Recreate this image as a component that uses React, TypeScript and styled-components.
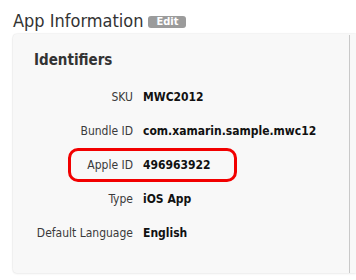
import React from "react";
import styled, { createGlobalStyle } from "styled-components";

const Global = createGlobalStyle`
  html, body { margin: 0; padding: 0; background: #ffffff; }
  body { font-family: "DejaVu Sans Condensed", "DejaVu Sans", "Liberation Sans", sans-serif; font-stretch: semi-condensed; }
`;

const Page = styled.div`
  width: 356px;
  height: 280px;
  overflow: hidden;
  padding: 10px 0 0 13px;
  box-sizing: border-box;
`;

const Header = styled.div`
  display: flex;
  align-items: center;
  gap: 5px;
  height: 22px;
`;

const Title = styled.h1`
  margin: 0;
  font-size: 18px;
  font-weight: normal;
  line-height: 22px;
  color: #333333;
`;

const Badge = styled.span`
  display: inline-flex;
  align-items: center;
  justify-content: center;
  width: 38px;
  height: 12px;
  margin-top: 2px;
  border-radius: 3px;
  background: #9b9b9b;
  color: #ffffff;
  font-size: 11px;
  font-weight: bold;
  line-height: 12px;
`;

const Panel = styled.section`
  margin-top: 2px;
  display: flex;
  background: #f8f8f8;
  border-radius: 4px 0 0 4px;
  box-shadow: 0 -1px 1px rgba(0, 0, 0, 0.04), 0 1px 2px rgba(0, 0, 0, 0.08), -1px 0 1px rgba(0, 0, 0, 0.04);
  padding-right: 6px;
`;

const Inner = styled.div`
  flex: 1;
  margin-top: 1px;
  border-right: 1px solid #c9c9c9;
  padding: 16px 0 23px 0;
`;

const Heading = styled.h2`
  margin: 0 0 11px 21px;
  font-size: 15px;
  font-weight: bold;
  line-height: 18px;
  color: #333333;
`;

const Rows = styled.div`
  position: relative;
  display: grid;
  grid-template-columns: 120px 1fr;
  grid-auto-rows: 34px;
  column-gap: 10px;
  align-items: center;
`;

const Label = styled.div`
  text-align: right;
  font-size: 12px;
  color: #3a3a3a;
  white-space: nowrap;
`;

const Value = styled.div`
  font-size: 12px;
  font-weight: bold;
  color: #111111;
  white-space: nowrap;
`;

const Highlight = styled.div<{ $row: number }>`
  position: absolute;
  left: 55px;
  width: 169px;
  top: ${(p) => p.$row * 34}px;
  height: 34px;
  box-sizing: border-box;
  border: 3px solid #f20000;
  border-radius: 10px;
  pointer-events: none;
`;

const fields = [
  { label: "SKU", value: "MWC2012" },
  { label: "Bundle ID", value: "com.xamarin.sample.mwc12" },
  { label: "Apple ID", value: "496963922" },
  { label: "Type", value: "iOS App" },
  { label: "Default Language", value: "English" },
];

export default function App() {
  return (
    <>
      <Global />
      <Page>
        <Header>
          <Title>App Information</Title>
          <Badge>Edit</Badge>
        </Header>
        <Panel>
          <Inner>
            <Heading>Identifiers</Heading>
            <Rows>
              {fields.map((f) => (
                <React.Fragment key={f.label}>
                  <Label>{f.label}</Label>
                  <Value>{f.value}</Value>
                </React.Fragment>
              ))}
              <Highlight $row={2} />
            </Rows>
          </Inner>
        </Panel>
      </Page>
    </>
  );
}
